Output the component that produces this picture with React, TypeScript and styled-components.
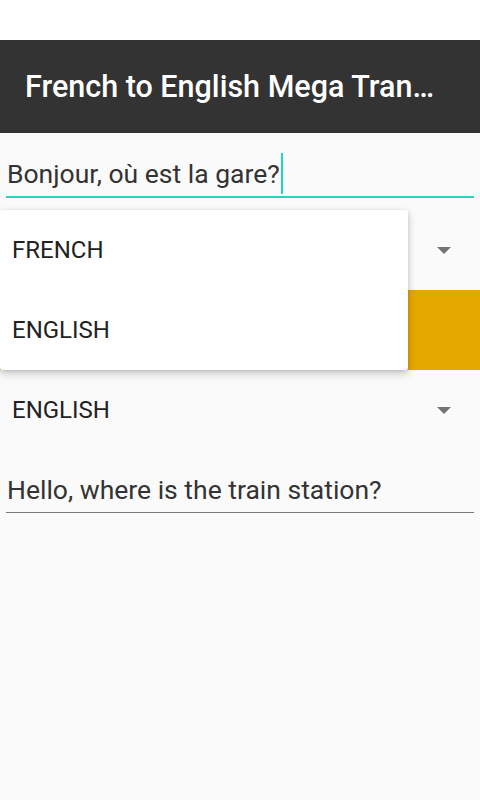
import styled, { createGlobalStyle } from 'styled-components';

const GlobalStyle = createGlobalStyle`
  body {
    margin: 0;
    background: #fafafa;
    font-family: Roboto, "Noto Sans", sans-serif;
  }
`;

const Screen = styled.div`
  width: 480px;
  height: 800px;
  display: flex;
  flex-direction: column;
  position: relative;
  overflow: hidden;
`;

const StatusBar = styled.div`
  height: 40px;
  background: #ffffff;
`;

const Toolbar = styled.div`
  height: 93px;
  background: #333333;
  display: flex;
  align-items: center;
  padding: 0 36px 0 25px;
  box-sizing: border-box;
`;

const Title = styled.span`
  flex: 1;
  min-width: 0;
  overflow: hidden;
  white-space: nowrap;
  text-overflow: ellipsis;
  color: #ffffff;
  font-size: 30.5px;
  font-weight: 500;
  line-height: 40px;
`;

const Field = styled.div<{ $active?: boolean }>`
  margin: 0 6px;
  padding: 20px 0 2px 1px;
  border-bottom: ${(p) => (p.$active ? '2px solid #1fd8bf' : '1px solid #7a7a7a')};
  display: flex;
  align-items: center;
`;

const FieldText = styled.span`
  font-size: 26.5px;
  line-height: 40px;
  color: #333333;
  white-space: nowrap;
`;

const Caret = styled.span`
  width: 2px;
  height: 41px;
  margin-left: 1px;
  background: #1fd8bf;
`;

const Spinner = styled.div<{ $top?: number }>`
  height: 80px;
  margin-top: ${(p) => p.$top ?? 0}px;
  display: flex;
  align-items: center;
  justify-content: space-between;
  padding: 0 29px 0 12px;
`;

const Option = styled.span`
  font-size: 24px;
  line-height: 40px;
  color: #222222;
`;

const Arrow = styled.span`
  width: 0;
  height: 0;
  border-left: 7px solid transparent;
  border-right: 7px solid transparent;
  border-top: 7px solid #747474;
`;

const TranslateButton = styled.div`
  height: 80px;
  background: #e4a800;
`;

const Popup = styled.div`
  position: absolute;
  top: 210px;
  left: 0;
  width: 408px;
  height: 160px;
  background: #ffffff;
  border-radius: 2px;
  box-shadow: 0 4px 10px rgba(0, 0, 0, 0.18), 0 1px 4px rgba(0, 0, 0, 0.12);
  display: flex;
  flex-direction: column;
`;

const PopupItem = styled.div`
  height: 80px;
  display: flex;
  align-items: center;
  padding-left: 12px;
`;

const App = () => {
  return (
    <Screen>
      <GlobalStyle />
      <StatusBar />
      <Toolbar>
        <Title>French to English Mega Translator</Title>
      </Toolbar>
      <Field $active>
        <FieldText>Bonjour, où est la gare?</FieldText>
        <Caret />
      </Field>
      <Spinner $top={12}>
        <Option>FRENCH</Option>
        <Arrow />
      </Spinner>
      <TranslateButton />
      <Spinner>
        <Option>ENGLISH</Option>
        <Arrow />
      </Spinner>
      <Field>
        <FieldText>Hello, where is the train station?</FieldText>
      </Field>
      <Popup>
        <PopupItem>
          <Option>FRENCH</Option>
        </PopupItem>
        <PopupItem>
          <Option>ENGLISH</Option>
        </PopupItem>
      </Popup>
    </Screen>
  );
};

export default App;
